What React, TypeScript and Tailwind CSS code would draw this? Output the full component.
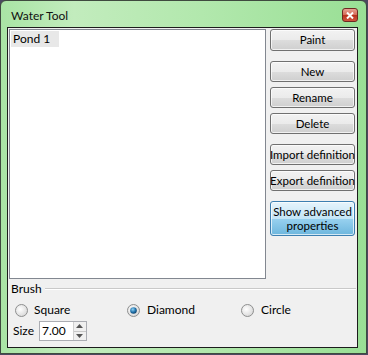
import type { ReactNode } from "react";

const font = { fontFamily: 'Lato, "Noto Sans", sans-serif' };

function VButton({ children, blue, className = "" }: { children: ReactNode; blue?: boolean; className?: string }) {
  const skin = blue
    ? "border-[#3c7fb1] bg-[linear-gradient(to_bottom,#e5f4fc_0%,#c4e5f6_50%,#98d1ef_51%,#6db6dd_100%)]"
    : "border-[#707070] bg-[linear-gradient(to_bottom,#f2f2f2_0%,#ebebeb_50%,#dddddd_51%,#cfcfcf_100%)]";
  return (
    <div
      className={`flex w-[85px] items-center justify-center whitespace-nowrap rounded-[3px] border text-center text-[11.5px] leading-[14px] text-black shadow-[inset_0_0_0_1px_rgba(255,255,255,0.7)] ${skin} ${className}`}
    >
      {children}
    </div>
  );
}

function Radio({ checked }: { checked?: boolean }) {
  return (
    <svg width="13" height="13" viewBox="0 0 13 13" className="shrink-0">
      <defs>
        <radialGradient id={checked ? "rg1" : "rg0"} cx="0.4" cy="0.4" r="0.7">
          <stop offset="0" stopColor="#ffffff" />
          <stop offset="1" stopColor="#d4d4d4" />
        </radialGradient>
        <radialGradient id="dot" cx="0.4" cy="0.35" r="0.7">
          <stop offset="0" stopColor="#8fd3f5" />
          <stop offset="0.6" stopColor="#1f6fa8" />
          <stop offset="1" stopColor="#0d3c63" />
        </radialGradient>
      </defs>
      <circle cx="6.5" cy="6.5" r="6" fill={`url(#${checked ? "rg1" : "rg0"})`} stroke="#8e8f8f" />
      {checked && <circle cx="6.5" cy="6.5" r="3.3" fill="url(#dot)" />}
    </svg>
  );
}

export default function App() {
  return (
    <div className="h-[355px] w-[368px] bg-[#4c4860]" style={font}>
      <div className="flex h-[354px] w-[367px] flex-col rounded-t-[6px] border border-[#3f4a3f] bg-[linear-gradient(to_right,#a9e4a5,#c2ecbd_20%,#b2e8ad_55%,#99df95)] pb-[5px] pl-[6px] pr-[8px]">
        <div className="flex h-[26px] shrink-0 items-center justify-between">
          <span className="pl-[4px] pt-[3px] text-[12px] leading-[14px] text-[#111]">Water Tool</span>
          <div className="mt-[2px] flex h-[14px] w-[16px] items-center justify-center rounded-[3px] border border-[#6d2a22] bg-[linear-gradient(to_bottom,#e8a193,#d46a57_50%,#b9311d_51%,#d0563f)]">
            <svg width="8" height="7" viewBox="0 0 8 7">
              <path d="M1 0.5 L7 6.5 M7 0.5 L1 6.5" stroke="#fff" strokeWidth="2" />
            </svg>
          </div>
        </div>
        <div className="flex flex-1 flex-col border border-[#1c1c1c] bg-[#f0f0f0] text-[12px] leading-[14px] text-black">
          <div className="flex pt-[1px]">
            <div className="ml-[1px] h-[250px] w-[257px] border border-[#828790] bg-white p-[1px]">
              <div className="flex h-[16px] w-[48px] items-center bg-[#e8e8e8] pl-[2px]">Pond 1</div>
            </div>
            <div className="ml-[4px] flex flex-col">
              <VButton className="h-[22px]">Paint</VButton>
              <VButton className="mt-[10px] h-[21px]">New</VButton>
              <VButton className="mt-[5px] h-[21px]">Rename</VButton>
              <VButton className="mt-[5px] h-[21px]">Delete</VButton>
              <VButton className="mt-[10px] h-[21px]">Import definition</VButton>
              <VButton className="mt-[5px] h-[21px]">Export definition</VButton>
              <VButton blue className="mt-[10px] h-[35px]">
                Show advanced
                <br />
                properties
              </VButton>
            </div>
          </div>
          <div className="mt-[3px] flex h-[14px] items-center pl-[3px] pr-[1px]">
            <span>Brush</span>
            <div className="ml-[3px] h-[2px] flex-1 border-t border-b border-t-[#c9c9c9] border-b-white" />
          </div>
          <div className="mt-[7px] flex h-[14px] items-center pl-[7px]">
            <div className="flex w-[112px] items-center gap-[6px]">
              <Radio />
              <span>Square</span>
            </div>
            <div className="flex w-[114px] items-center gap-[7px]">
              <Radio checked />
              <span>Diamond</span>
            </div>
            <div className="flex items-center gap-[7px]">
              <Radio />
              <span>Circle</span>
            </div>
          </div>
          <div className="mt-[4px] flex h-[20px] items-center pl-[5px]">
            <span>Size</span>
            <div className="ml-[5px] flex h-[20px] w-[48px] items-center border border-[#abadb3] bg-white">
              <span className="flex-1 pl-[2px]">7.00</span>
              <div className="flex h-full w-[13px] flex-col border-l border-[#d0d0d0] bg-[#f0f0f0]">
                <div className="flex flex-1 items-center justify-center border-b border-[#c8c8c8]">
                  <svg width="7" height="4" viewBox="0 0 7 4"><path d="M0 4 L3.5 0 L7 4 Z" fill="#555" /></svg>
                </div>
                <div className="flex flex-1 items-center justify-center">
                  <svg width="7" height="4" viewBox="0 0 7 4"><path d="M0 0 L3.5 4 L7 0 Z" fill="#555" /></svg>
                </div>
              </div>
            </div>
          </div>
        </div>
      </div>
    </div>
  );
}
